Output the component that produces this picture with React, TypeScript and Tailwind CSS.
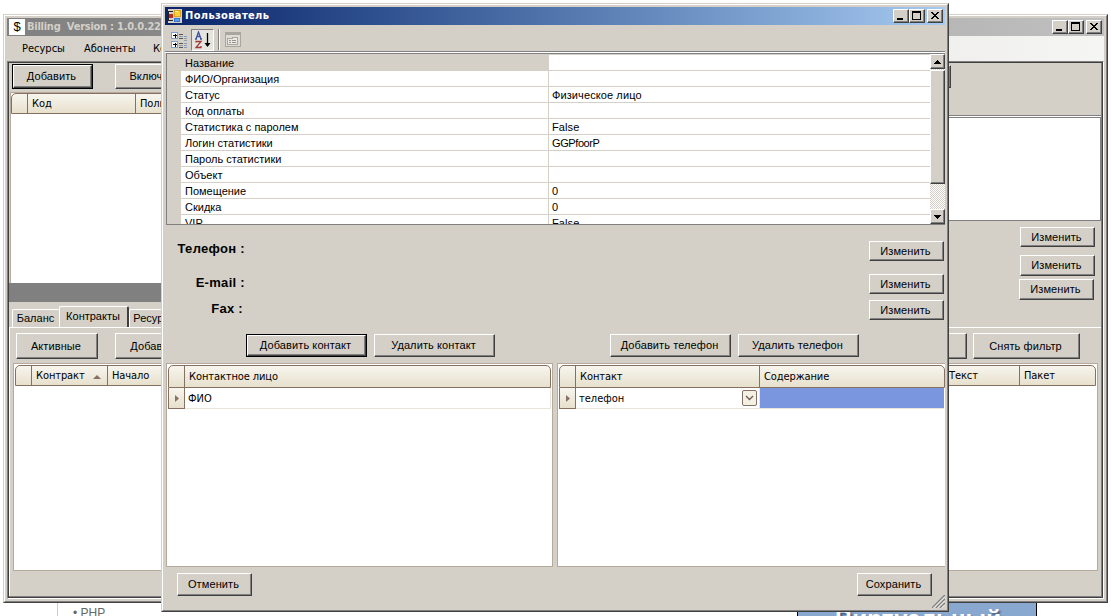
import type { ReactNode } from 'react';
import clsx from 'clsx';

const properties = [
  { name: 'Название', value: '' },
  { name: 'ФИО/Организация', value: '' },
  { name: 'Статус', value: 'Физическое лицо' },
  { name: 'Код оплаты', value: '' },
  { name: 'Статистика с паролем', value: 'False' },
  { name: 'Логин статистики', value: 'GGPfoorP' },
  { name: 'Пароль статистики', value: '' },
  { name: 'Объект', value: '' },
  { name: 'Помещение', value: '0' },
  { name: 'Скидка', value: '0' },
  { name: 'VIP', value: 'False' },
];

// Classic raised push button, the default one gets a black frame
function Button({ children, className, isDefault }: { children?: ReactNode; className?: string; isDefault?: boolean }) {
  return (
    <button className={clsx('block shrink-0 bg-[#d4d0c8] text-[11px] tracking-[0.1px] whitespace-nowrap', isDefault && 'border border-black', className)}>
      <span className="block h-full border border-t-white border-l-white border-r-[#404040] border-b-[#404040]">
        <span className="flex h-full items-center justify-center border-r border-b border-[#808080] pt-px pr-px">{children}</span>
      </span>
    </button>
  );
}

function Frame({ children, className }: { children: ReactNode; className: string }) {
  return (
    <div className={clsx('absolute border border-t-[#d4d0c8] border-l-[#d4d0c8] border-r-[#404040] border-b-[#404040] bg-[#d4d0c8]', className)}>
      <div className="flex h-full flex-col border border-t-white border-l-white border-r-[#808080] border-b-[#808080] p-[2px]">
        {children}
      </div>
    </div>
  );
}

function CaptionButton({ kind }: { kind: 'min' | 'max' | 'close' }) {
  return (
    <Button className={clsx('h-[14px] w-4', kind === 'close' && 'ml-[2px]')}>
      <svg width="10" height="9" viewBox="0 0 10 9" shapeRendering="crispEdges" className="mb-px ml-px">
        {kind === 'min' && <path d="M1 7h6v2H1z" />}
        {kind === 'max' && <path d="M0 0h9v9H0zM1 2v6h7V2z" fillRule="evenodd" />}
        {kind === 'close' && (
          <path d="M1 1h2v1h1v1h2v-1h1v-1h2v1h-1v1h-1v1h-1v1h1v1h1v1h1v1h-2v-1h-1v-1h-2v1h-1v1h-2v-1h1v-1h1v-1h1v-1h-1v-1h-1v-1h-1z" />
        )}
      </svg>
    </Button>
  );
}

function CaptionButtons() {
  return (
    <div className="ml-auto flex pr-[2px]">
      <CaptionButton kind="min" />
      <CaptionButton kind="max" />
      <CaptionButton kind="close" />
    </div>
  );
}

// Header cell of the data grids
function HeadCell({ children, className }: { children?: ReactNode; className?: string }) {
  return (
    <div className={clsx('flex shrink-0 items-center border-r border-[#857062] pt-[2px] pl-[4px]', className)}>{children}</div>
  );
}

function Header({ children, className }: { children: ReactNode; className?: string }) {
  return (
    <div
      className={clsx(
        'flex shrink-0 overflow-hidden rounded-t-[5px] border border-[#857062] bg-linear-to-b from-[#f7f5ee] to-[#e7e0cd] font-["DejaVu_Sans_Condensed","DejaVu_Sans"] text-[11px] tracking-[-0.1px] font-stretch-condensed',
        className,
      )}
    >
      {children}
    </div>
  );
}

function RowMarker() {
  return (
    <div className="flex w-[17px] shrink-0 items-center justify-center border border-t-0 border-[#857062] bg-linear-to-b from-[#f7f5ee] to-[#e7e0cd]">
      <svg width="4" height="7" viewBox="0 0 4 7">
        <path d="M0 0l4 3.5L0 7z" fill="#857062" />
      </svg>
    </div>
  );
}

function Tab({ children, className }: { children: ReactNode; className: string }) {
  return (
    <div className={clsx('flex shrink-0 items-center justify-center rounded-t-[2px] border border-b-0 border-white border-r-[#404040] text-[11px]', className)}>
      {children}
    </div>
  );
}

function BillingWindow() {
  return (
    <Frame className="left-[3px] top-[14px] h-[589px] w-[1105px]">
      <div className="flex h-[18px] shrink-0 items-center bg-linear-to-r from-[#808080] to-[#c0c0c0]">
        <div className="ml-[2px] flex h-4 w-4 items-center justify-center bg-white text-[13px]">$</div>
        <div className="ml-[2px] pt-px font-['DejaVu_Sans_Condensed','DejaVu_Sans'] text-[11px] font-bold tracking-[-0.25px] whitespace-pre text-[#d4d0c8] font-stretch-condensed">
          {'Billing  Version : 1.0.0.22'}
        </div>
        <CaptionButtons />
      </div>
      <div className="flex h-[25px] shrink-0 items-center bg-linear-to-r from-[#d4d0c8] to-[#f5f5f4] pt-[2px] pl-[15px] font-['DejaVu_Sans_Condensed','DejaVu_Sans'] text-[11px] font-stretch-condensed">
        <span className="w-[62px]">Ресурсы</span>
        <span className="w-[69px]">Абоненты</span>
        <span>Контракты</span>
      </div>
      <div className="min-h-0 flex-1 border border-t-[#808080] border-l-[#808080] border-r-white border-b-white">
        <div className="flex h-full flex-col border border-[#404040]">
          <div className="flex min-h-0 flex-1 flex-col border-r border-b border-[#808080]">
            <div className="flex h-[239px] shrink-0">
              <div className="flex w-[600px] shrink-0 flex-col">
                <div className="flex h-[29px] gap-[22px] pt-px pl-[3px]">
                  <Button isDefault className="h-[25px] w-[81px]">Добавить</Button>
                  <Button className="h-[25px] w-[81px]">Включить</Button>
                </div>
                <div className="ml-px h-[191px] border-t border-l border-[#b5aa9c] bg-white">
                  <Header className="h-[21px]">
                    <HeadCell className="w-4" />
                    <HeadCell className="w-[108px]">Код</HeadCell>
                    <HeadCell>Пользователь</HeadCell>
                  </Header>
                </div>
                <div className="h-[19px] bg-[#808080]" />
              </div>
              <div className="flex flex-1 flex-col">
                <div className="h-[52px] pt-[2px] pl-[261px]">
                  <Button className="h-[23px] w-[81px]" />
                </div>
                <div className="h-[2px] border-t border-b border-t-[#808080] border-b-white" />
                <div className="h-[104px] border-t border-r border-b border-[#808080] bg-white" />
                <div className="flex flex-col items-end pt-[6px] pr-[6px]">
                  <Button className="h-[20px] w-[75px]">Изменить</Button>
                  <Button className="mt-[8px] h-[21px] w-[75px]">Изменить</Button>
                  <Button className="mt-[3px] mr-px h-[21px] w-[75px]">Изменить</Button>
                </div>
              </div>
            </div>
            <div className="flex h-[25px] shrink-0 items-end pl-[3px]">
              <Tab className="h-[18px] w-[47px] border-r-0 pr-px">Баланс</Tab>
              <Tab className="h-[21px] w-[70px] border-r-2 pr-px pb-[2px]">Контракты</Tab>
              <Tab className="h-[18px] w-[52px]">Ресурсы</Tab>
            </div>
            <div className="flex min-h-0 flex-1 flex-col border-t border-l border-white">
              <div className="flex h-[35px] shrink-0 pt-[5px] pr-[21px] pl-[6px]">
                <Button className="h-[26px] w-[82px]">Активные</Button>
                <Button className="ml-[17px] h-[26px] w-[82px]">Добавить</Button>
                <Button className="ml-auto h-[26px] w-[82px]" />
                <Button className="ml-[6px] h-[26px] w-[107px]">Снять фильтр</Button>
              </div>
              <div className="mr-[3px] mb-[25px] ml-[3px] min-h-0 flex-1 border border-[#b5aa9c] bg-white p-px">
                <Header className="h-[21px]">
                  <HeadCell className="w-4" />
                  <HeadCell className="w-[76px]">
                    Контракт
                    <svg width="8" height="4" viewBox="0 0 8 4" className="ml-[8px]">
                      <path d="M0 4l4-4 4 4z" fill="#857062" />
                    </svg>
                  </HeadCell>
                  <HeadCell className="w-[837px]">Начало</HeadCell>
                  <HeadCell className="w-[75px]">Текст</HeadCell>
                  <HeadCell className="flex-1 border-r-0">Пакет</HeadCell>
                </Header>
              </div>
            </div>
          </div>
        </div>
      </div>
    </Frame>
  );
}

function FormIcon() {
  return (
    <svg width="14" height="14" viewBox="0 0 14 14" shapeRendering="crispEdges" className="ml-[3px]">
      <path fill="#d4d0c8" d="M0 0h14v14H0z" />
      <path fill="#222" d="M0 2h5v1H0zM0 2h1v10H0zM0 11h5v1H0z" />
      <path fill="#c22a20" d="M1 5h4v4H1z" />
      <path fill="#f7cf3a" stroke="#d9a520" d="M6.5 1.5h6v6h-6z" />
      <path fill="#5a9bea" stroke="#3a76cf" d="M6.5 9.500h5v3h-5z" />
      <path fill="#fff5b0" d="M7 2h3v1H7z" />
    </svg>
  );
}

function PropertyToolbar() {
  return (
    <div className="flex h-[26px] shrink-0 items-center pt-[3px] pl-[5px]">
      <svg width="18" height="18" viewBox="0 0 18 18" shapeRendering="crispEdges">
        <path fill="#fff" stroke="#7ba0c9" d="M1.500 1.500h6v6h-6zM1.500 10.500h6v6h-6z" />
        <path fill="#000" d="M3 4h4v1H3zM4.500 3h1v4h-1zM3 13h4v1H3zM4.500 12h1v4h-1z" />
        <path fill="#555" d="M9 3h4v1H9zM9 7h4v1H9zM9 12h4v1H9zM9 16h4v1H9z" />
        <path fill="#8a9bb5" d="M14 5h3v1h-3zM14 7h3v1h-3zM14 9h3v1h-3zM14 12h3v1h-3zM14 14h3v1h-3zM14 16h3v1h-3zM9 5h4v1H9zM9 14h4v1H9z" />
      </svg>
      <div className="ml-[3px] flex h-[22px] w-[23px] items-center justify-center border border-[#808080] border-r-white border-b-white bg-[#e6e4df]">
        <svg width="18" height="18" viewBox="0 0 18 18" fill="none">
          <path stroke="#3c53a4" strokeWidth="1.300" d="M2 8l2.500-7L7 8M3 5.500h3M1 8h2M6 8h2" />
          <path stroke="#a03a34" strokeWidth="1.300" d="M2 11.500V10.500h5l-5 6h5v-1.500" />
          <path stroke="#000" strokeWidth="1.300" d="M13.500 2v13" />
          <path fill="#000" d="M10.500 12h6l-3 4z" />
        </svg>
      </div>
      <div className="ml-[4px] h-[21px] w-[2px] border-r border-l border-l-[#808080] border-r-white" />
      <svg width="16" height="15" viewBox="0 0 16 15" shapeRendering="crispEdges" className="ml-[5px]" fill="none">
        <path stroke="#a9a69f" fill="#dedbd5" d="M.5.500h15v14H.5z" />
        <path fill="#a9a69f" d="M1 1h14v2H1z" />
        <path stroke="#aaa7a0" fill="#ebe9e5" d="M2.500 6.500h5v-1h5v7h-10z" />
        <path fill="#96938c" d="M4 8h2v1H4zM7 8h4v1H7zM4 10h2v1H4zM7 10h4v1H7z" />
      </svg>
    </div>
  );
}

function ScrollBar() {
  return (
    <div className="flex w-[15px] shrink-0 flex-col bg-[repeating-conic-gradient(#fff_0_25%,#d4d0c8_0_50%)] bg-size-[2px_2px]">
      <Button className="h-[15px]">
        <svg width="7" height="4" viewBox="0 0 7 4" shapeRendering="crispEdges" className="ml-px">
          <path d="M3 0h1v1h1v1h1v1h1v1H0V3h1V2h1V1h1z" />
        </svg>
      </Button>
      <Button className="mt-px h-[114px]" />
      <Button className="mt-auto h-[15px]">
        <svg width="7" height="4" viewBox="0 0 7 4" shapeRendering="crispEdges" className="ml-px">
          <path d="M0 0h7v1H6v1H5v1H4v1H3V3H2V2H1V1H0z" />
        </svg>
      </Button>
    </div>
  );
}

function PropertyGrid() {
  return (
    <div className="ml-px flex h-[172px] shrink-0 overflow-hidden border border-r-0 border-[#808080] bg-[#d4d0c8] text-[11px] leading-[15px]">
      <div className="ml-[14px] h-[170px] flex-1 overflow-hidden pt-px">
        {properties.map((property, index) => (
          <div key={property.name} className="flex h-4 border-b border-[#d4d0c8] bg-white">
            <div className={clsx('w-[368px] shrink-0 border-r border-[#d4d0c8] pt-px pl-[4px]', index === 0 && 'bg-[#d4d0c8]')}>
              {property.name}
            </div>
            <div className={clsx('pt-px pl-[3px]', property.value === 'GGPfoorP' ? 'tracking-[-0.4px]' : 'tracking-[0.1px]')}>{property.value}</div>
          </div>
        ))}
      </div>
      <ScrollBar />
    </div>
  );
}

function UserDialog() {
  return (
    <Frame className="left-[161px] top-[3px] h-[609px] w-[788px]">
      <div className="flex h-[18px] shrink-0 items-center bg-linear-to-r from-[#0a246a] to-[#a6caf0]">
        <FormIcon />
        <div className="ml-[3px] pt-px font-['DejaVu_Sans_Condensed','DejaVu_Sans'] text-[11px] font-bold tracking-[0.35px] text-white font-stretch-condensed">
          Пользователь
        </div>
        <CaptionButtons />
      </div>
      <PropertyToolbar />
      <div className="h-[2px] shrink-0 border-t border-b border-t-[#808080] border-b-white" />
      <PropertyGrid />
      <div className="flex h-[109px] shrink-0 justify-between pr-px text-[13px] leading-4 font-bold">
        <div className="flex w-[80px] flex-col items-end pt-[16px] tracking-[0.3px]">
          <div>Телефон :</div>
          <div className="mt-[18px]">E-mail :</div>
          <div className="mt-[10px] mr-[2px]">Fax :</div>
        </div>
        <div className="flex flex-col pt-[16px] font-normal">
          <Button className="h-[20px] w-[75px]">Изменить</Button>
          <Button className="mt-[13px] h-[20px] w-[75px]">Изменить</Button>
          <Button className="mt-[6px] h-[20px] w-[75px]">Изменить</Button>
        </div>
      </div>
      <div className="flex h-[29px] shrink-0 pl-[81px]">
        <Button isDefault className="h-[23px] w-[121px]">Добавить контакт</Button>
        <Button className="ml-[7px] h-[23px] w-[121px]">Удалить контакт</Button>
        <Button className="ml-[115px] h-[23px] w-[121px]">Добавить телефон</Button>
        <Button className="ml-[7px] h-[23px] w-[121px]">Удалить телефон</Button>
      </div>
      <div className="flex h-[204px] shrink-0 gap-[4px] pl-px font-['DejaVu_Sans_Condensed','DejaVu_Sans'] text-[11px] font-stretch-condensed">
        <div className="w-[387px] shrink-0 border border-[#b5aa9c] bg-white p-px">
          <Header className="h-[23px]">
            <HeadCell className="w-4" />
            <HeadCell className="flex-1 border-r-0">Контактное лицо</HeadCell>
          </Header>
          <div className="flex h-[21px]">
            <RowMarker />
            <div className="flex flex-1 items-center border-r border-b border-[#e9e5d9] pt-[2px] pl-[3px]">ФИО</div>
          </div>
        </div>
        <div className="flex-1 border border-r-0 border-[#b5aa9c] bg-white py-px pl-px">
          <Header className="h-[23px]">
            <HeadCell className="w-4" />
            <HeadCell className="w-[184px]">Контакт</HeadCell>
            <HeadCell className="flex-1 border-r-0">Содержание</HeadCell>
          </Header>
          <div className="flex h-[21px]">
            <RowMarker />
            <div className="flex w-[184px] shrink-0 items-center border-r border-b border-[#e9e5d9] pr-[2px] pl-[3px]">
              <span className="pt-[2px]">телефон</span>
              <div className="ml-auto flex h-4 w-[15px] items-center justify-center rounded-[2px] border border-[#857062] bg-[#f3f0e6]">
                <svg width="9" height="6" viewBox="0 0 9 6" fill="none">
                  <path d="M1 1l3.500 3.500L8 1" stroke="#6f5b4d" strokeWidth="1.300" />
                </svg>
              </div>
            </div>
            <div className="mr-px flex-1 border-b border-[#e9e5d9] bg-[#7a96df]" />
          </div>
        </div>
      </div>
      <div className="flex flex-1 pt-[6px] pl-[12px]">
        <Button className="h-[23px] w-[75px]">Отменить</Button>
        <Button className="ml-auto h-[23px] w-[75px]">Сохранить</Button>
        <svg width="13" height="13" viewBox="0 0 13 13" className="mt-[22px]" stroke="#808080" strokeWidth="1.500">
          <path d="M0 13L13 0M4 13l9-9M8 13l5-5" />
          <path d="M1.500 13L13 1.500M5.500 13L13 5.500M9.500 13l3.500-3.500" stroke="#fff" strokeWidth=".8" />
        </svg>
      </div>
    </Frame>
  );
}

export default function App() {
  return (
    <div className="relative flex h-[616px] w-[1111px] items-end overflow-hidden bg-white font-['Liberation_Sans',Arial,sans-serif] text-black">
      {/* page that shows below the windows */}
      <div className="ml-[57px] h-[20px] w-[740px] border-l border-[#ccc] pt-[9px] pl-[15px] text-[12px] leading-4 text-[#666]">• PHP</div>
      <div className="flex h-[20px] w-[240px] justify-center overflow-hidden border-x border-black bg-[#89a8d0]">
        <div className="pt-[9px] pl-[2px] text-[24px] leading-[27px] font-bold tracking-[0.1px] text-white text-shadow-[2px_2px_2px_#44597a]">Виртуальный</div>
      </div>
      <BillingWindow />
      <UserDialog />
    </div>
  );
}
